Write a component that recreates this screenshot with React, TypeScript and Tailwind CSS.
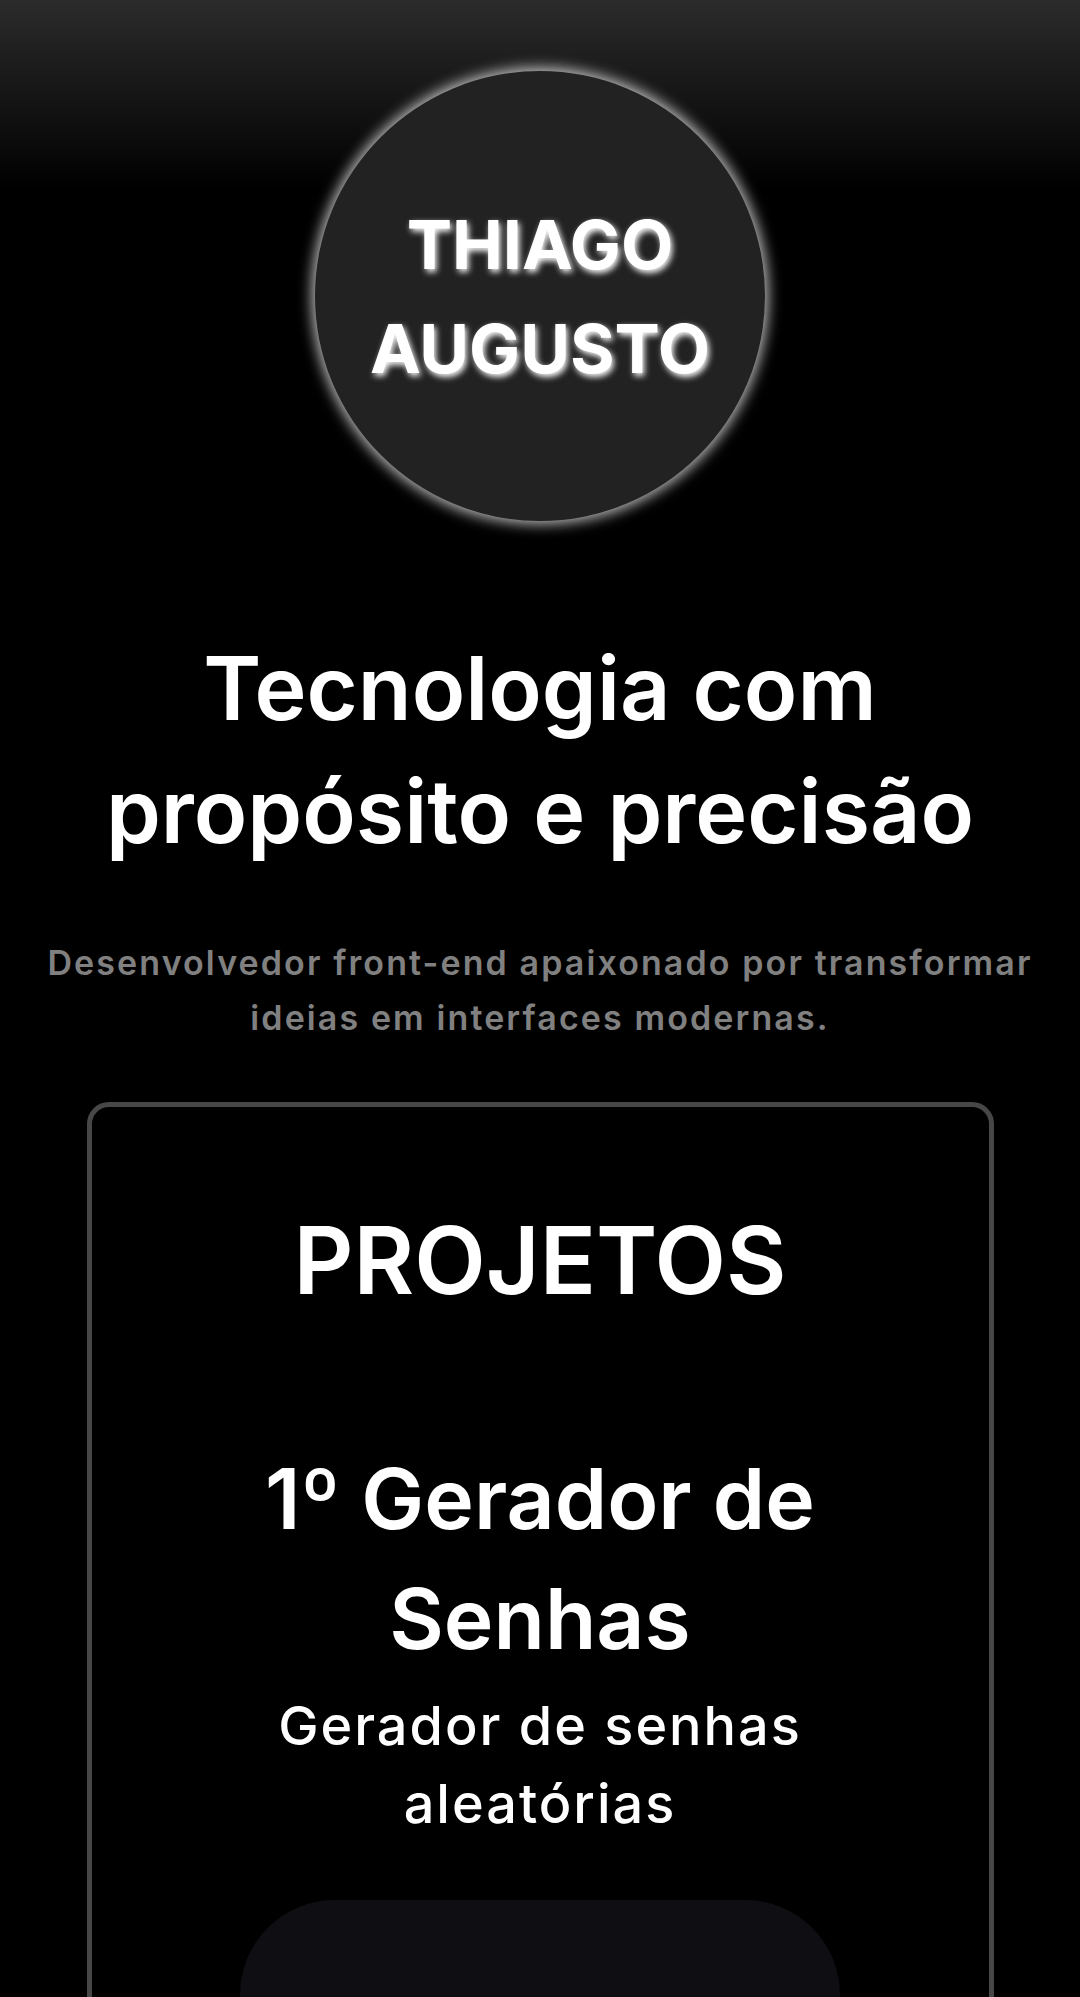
export default function App() {
  return (
    <div className="min-h-screen w-full bg-black bg-[linear-gradient(180deg,#2b2b2b_0px,#000000_190px)] font-['Inter','Noto_Sans',sans-serif] text-white flex flex-col items-center overflow-hidden">
      <div className="mt-[71px] w-[450px] h-[450px] shrink-0 rounded-full bg-[#222222] shadow-[0_0_14px_3px_rgba(255,255,255,0.75)] flex items-center justify-center text-center">
        <h1 className="text-[68px] font-bold leading-[104px] [text-shadow:2px_3px_6px_#ffffff]">
          THIAGO
          <br />
          AUGUSTO
        </h1>
      </div>

      <h2 className="mt-[106px] text-center text-[88px] font-semibold leading-[123px]">
        Tecnologia com
        <br />
        propósito e precisão
      </h2>

      <p className="mt-[62px] text-center text-[34px] font-semibold leading-[55px] tracking-[2.1px] text-[#808080]">
        Desenvolvedor front-end apaixonado por transformar
        <br />
        ideias em interfaces modernas.
      </p>

      <section className="mt-[57px] w-[907px] border-[5px] border-[#474747] rounded-[22px] flex flex-col items-center pt-[81px] pb-[40px]">
        <h2 className="text-center text-[93px] font-semibold leading-[144px]">PROJETOS</h2>

        <h3 className="mt-[107px] text-center text-[84px] font-semibold leading-[120px]">
          1º Gerador de
          <br />
          Senhas
        </h3>
        <p className="mt-[8px] text-center text-[54px] font-medium leading-[78px] tracking-[2px]">
          Gerador de senhas
          <br />
          aleatórias
        </p>

        <div className="mt-[57px] w-[600px] h-[420px] rounded-[95px] bg-[#0f0f13]"></div>
      </section>
    </div>
  );
}
